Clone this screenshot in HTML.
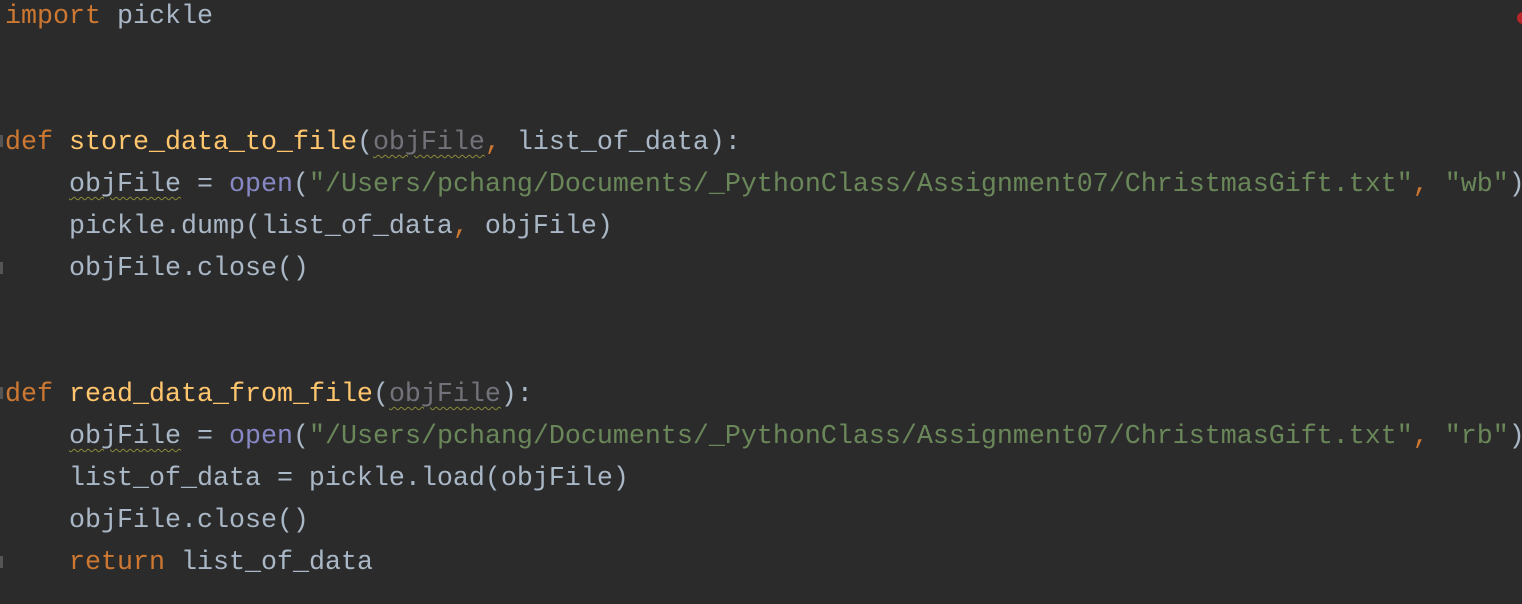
<html><head><style>
body{margin:0;background:#2b2b2b;width:1522px;height:604px;overflow:hidden;position:relative}
pre{margin:0;position:absolute;left:5px;top:-4px;font-family:"Liberation Mono",monospace;font-size:26.67px;line-height:42px;color:#a9b7c6}
.k{color:#cc7832}.f{color:#ffc66d}.s{color:#6a8759}.b{color:#8888c6}.g{color:#72737a}
.w{text-decoration:underline wavy #8a8a3a;text-decoration-thickness:1px;text-underline-offset:5px}
.dot{position:absolute;left:1517px;top:12px;width:12px;height:12px;border-radius:50%;background:#b8262a}
.fold{position:absolute;left:0;width:3px;height:12px;background:#555}
</style></head><body>
<pre><span class="k">import</span> pickle


<span class="k">def</span> <span class="f">store_data_to_file</span>(<span class="g w">objFile</span><span class="k">,</span> list_of_data):
    <span class="w">objFile</span> = <span class="b">open</span>(<span class="s">"/Users/pchang/Documents/_PythonClass/Assignment07/ChristmasGift.txt"</span><span class="k">,</span> <span class="s">"wb"</span>)
    pickle.dump(list_of_data<span class="k">,</span> objFile)
    objFile.close()


<span class="k">def</span> <span class="f">read_data_from_file</span>(<span class="g w">objFile</span>):
    <span class="w">objFile</span> = <span class="b">open</span>(<span class="s">"/Users/pchang/Documents/_PythonClass/Assignment07/ChristmasGift.txt"</span><span class="k">,</span> <span class="s">"rb"</span>)
    list_of_data = pickle.load(objFile)
    objFile.close()
    <span class="k">return</span> list_of_data
</pre>
<div class="fold" style="top:135px"></div>
<div class="fold" style="top:262px"></div>
<div class="fold" style="top:387px"></div>
<div class="fold" style="top:556px"></div>
<div class="dot"></div>
</body></html>
